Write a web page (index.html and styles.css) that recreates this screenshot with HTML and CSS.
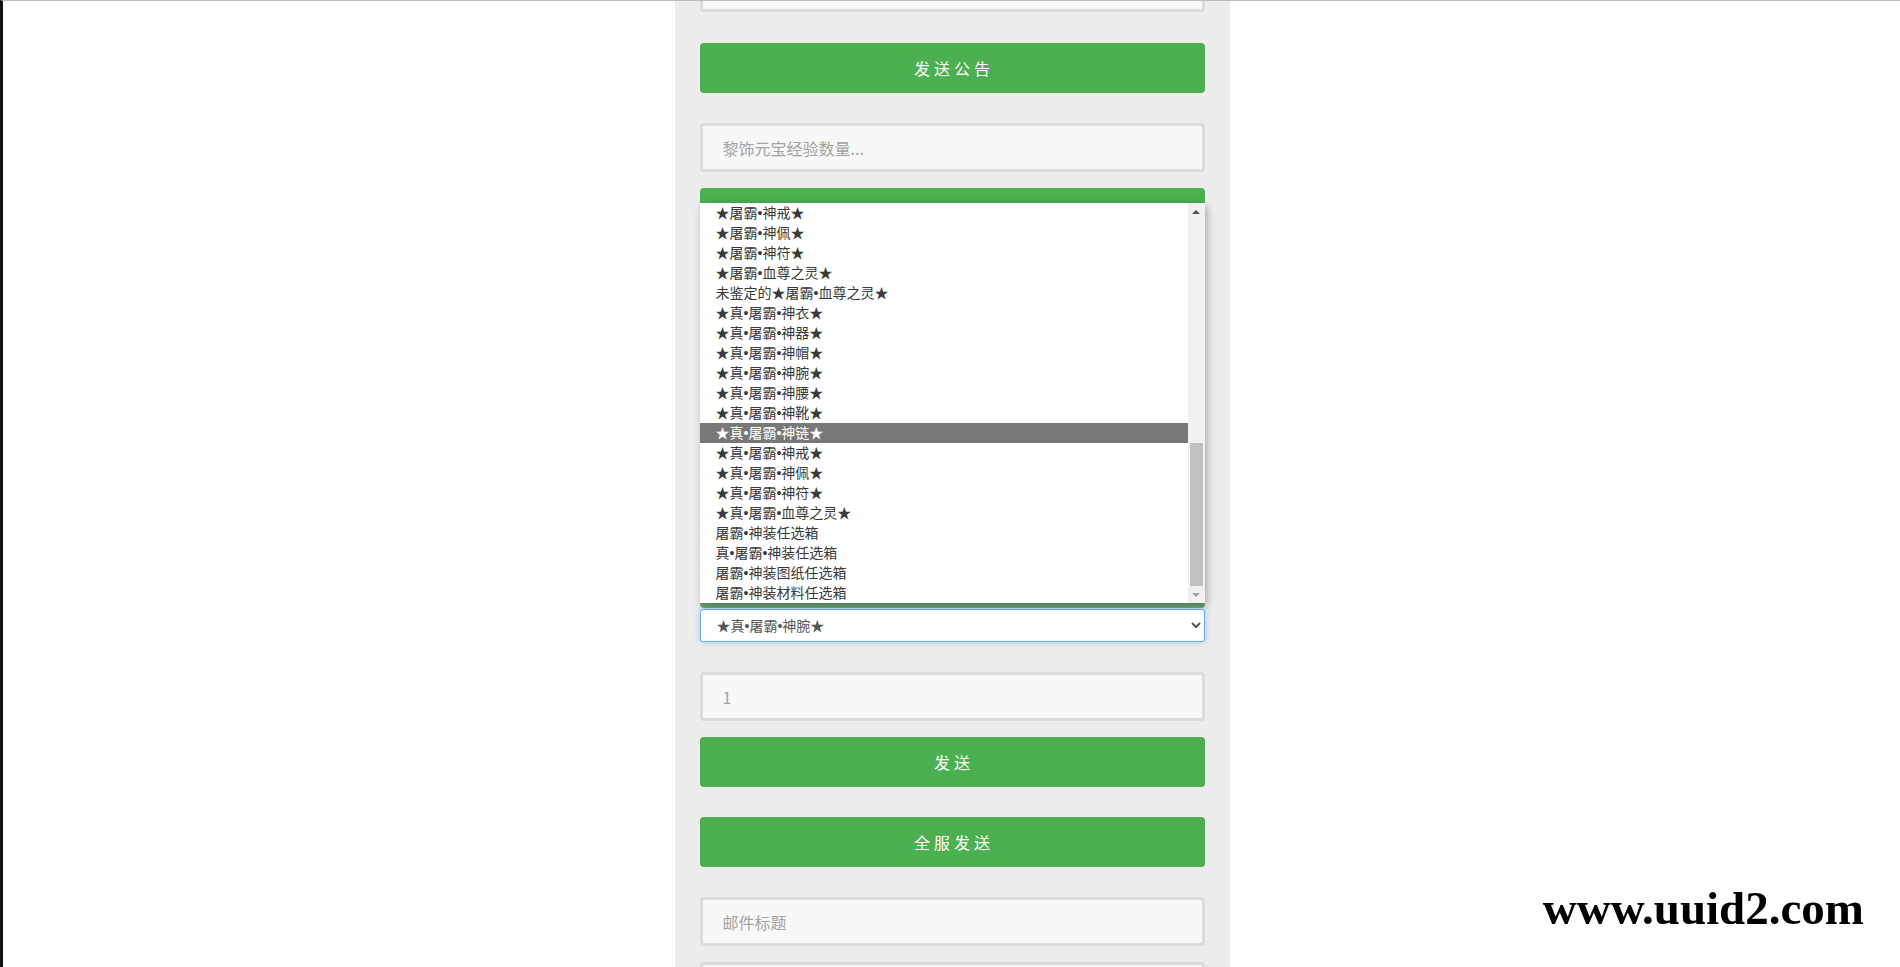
FILE: index.html
```html
<!DOCTYPE html>
<html lang="zh-CN">
<head>
  <meta charset="UTF-8" />
  <title>GM</title>
  <link rel="stylesheet" href="styles.css">
</head>
<body>

  <div id="main">
    <div class="panel">
      <input class="field field-top" type="text" placeholder="公告内容">
      <button class="btn">发送公告</button>

      <input class="field" type="text" placeholder="黎饰元宝经验数量...">
      <button class="btn">发送</button>

      <input class="field" type="text" placeholder="元宝数量">
      <button class="btn">发送</button>
      <input class="field" type="text" placeholder="经验数量">
      <button class="btn">发送</button>
      <button class="btn btn-flush">查询</button>

      <div class="picker">
        <div class="picker-list">
          <div class="rows">
            <div class="row">★屠霸•神戒★</div>
            <div class="row">★屠霸•神佩★</div>
            <div class="row">★屠霸•神符★</div>
            <div class="row">★屠霸•血尊之灵★</div>
            <div class="row">未鉴定的★屠霸•血尊之灵★</div>
            <div class="row">★真•屠霸•神衣★</div>
            <div class="row">★真•屠霸•神器★</div>
            <div class="row">★真•屠霸•神帽★</div>
            <div class="row">★真•屠霸•神腕★</div>
            <div class="row">★真•屠霸•神腰★</div>
            <div class="row">★真•屠霸•神靴★</div>
            <div class="row active">★真•屠霸•神链★</div>
            <div class="row">★真•屠霸•神戒★</div>
            <div class="row">★真•屠霸•神佩★</div>
            <div class="row">★真•屠霸•神符★</div>
            <div class="row">★真•屠霸•血尊之灵★</div>
            <div class="row">屠霸•神装任选箱</div>
            <div class="row">真•屠霸•神装任选箱</div>
            <div class="row">屠霸•神装图纸任选箱</div>
            <div class="row">屠霸•神装材料任选箱</div>
          </div>
          <div class="scrollbar">
            <div class="arrow"><span class="arrow-up"></span></div>
            <div class="track"><div class="thumb"></div></div>
            <div class="arrow"><span class="arrow-down"></span></div>
          </div>
        </div>
        <select class="item-select">
          <option>★真•屠霸•神腕★</option>
        </select>
      </div>

      <input class="field" type="text" placeholder="1">
      <button class="btn">发送</button>
      <button class="btn">全服发送</button>

      <input class="field" type="text" placeholder="邮件标题">
      <input class="field" type="text" placeholder="邮件内容">
    </div>
  </div>

  <div class="watermark">www.uuid2.com</div>

</body>
</html>
```
FILE: styles.css
```css
html, body {
  margin: 0;
  padding: 0;
  overflow: hidden;
  background: white;
  font-family: "Noto Sans CJK SC", "Noto Sans", sans-serif;
}

body {
  height: 966px;
  border-top: 1px solid #bdbdbd;
  border-left: 3px solid #111;
}

#main {
  display: flex;
  justify-content: center;
  height: 100%;
  padding-left: 1px;
}

.panel {
  width: 555px;
  height: 100%;
  box-sizing: border-box;
  padding: 0 25px 0 25px;
  background: #ededed;
  display: flex;
  flex-direction: column;
}

.field {
  height: 49px;
  flex: none;
  box-sizing: border-box;
  margin: 0 0 16px 0;
  padding: 0 20px;
  border: 3px solid #dcdcdc;
  border-radius: 4px;
  background: #f8f8f8;
  font-family: inherit;
  font-size: 16px;
  color: #555;
  outline: none;
}

.field::placeholder {
  color: #a3a3a3;
}

.field-top {
  margin-top: -38px;
  margin-bottom: 31px;
}

.btn {
  height: 50px;
  flex: none;
  margin: 0 0 30px 0;
  border: none;
  border-radius: 4px;
  background: #4caf50;
  color: white;
  font-family: inherit;
  font-size: 16px;
  letter-spacing: 4px;
  text-indent: 4px;
  cursor: pointer;
}

.btn-flush {
  margin-bottom: 0;
  background: #6fa86f;
}

.picker {
  position: relative;
  margin-top: 1px;
  margin-bottom: 30px;
}

.item-select {
  width: 100%;
  height: 33px;
  padding: 0 8px 0 12px;
  border: 1px solid #66afe9;
  border-radius: 3px;
  background: white;
  box-shadow: 0 0 6px rgba(102, 175, 233, 0.6);
  font-family: "Liberation Sans", "Noto Sans CJK SC", sans-serif;
  font-size: 14px;
  color: #555;
  outline: none;
}

.picker-list {
  position: absolute;
  left: 0;
  right: 0;
  bottom: calc(100% + 6px);
  height: 400px;
  display: flex;
  background: white;
  box-shadow: 2px 3px 8px rgba(0, 0, 0, 0.3);
  z-index: 5;
}

.rows {
  flex: 1;
}

.row {
  height: 20px;
  line-height: 20px;
  padding-left: 16px;
  font-family: "Liberation Sans", "Noto Sans CJK SC", sans-serif;
  font-size: 14px;
  color: #3a3a3a;
  white-space: nowrap;
}

.row.active {
  background: #787878;
  color: white;
}

.scrollbar {
  width: 17px;
  display: flex;
  flex-direction: column;
  background: #f1f1f1;
}

.arrow {
  height: 17px;
  display: flex;
  align-items: center;
  justify-content: center;
}

.arrow-up {
  border-left: 4px solid transparent;
  border-right: 4px solid transparent;
  border-bottom: 4px solid #505050;
}

.arrow-down {
  border-left: 4px solid transparent;
  border-right: 4px solid transparent;
  border-top: 4px solid #a3a3a3;
}

.track {
  flex: 1;
  display: flex;
  justify-content: center;
}

.thumb {
  width: 13px;
  height: 143px;
  margin-top: 223px;
  background: #c1c1c1;
}

.watermark {
  position: fixed;
  right: 36px;
  top: 884px;
  font-family: "Liberation Serif", serif;
  font-weight: bold;
  font-size: 47px;
  line-height: 48px;
  color: black;
}
```
